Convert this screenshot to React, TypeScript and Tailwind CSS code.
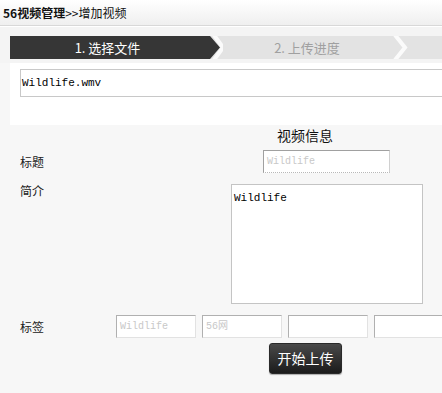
const cjk = "font-['SimSun','Noto_Sans_CJK_SC',sans-serif]";
const mono = "font-['Liberation_Mono','Noto_Sans_CJK_SC',monospace]";

const Chevron = ({ dark }: { dark?: boolean }) => (
  <svg width="22" height="23" viewBox="0 0 22 23" className="shrink-0">
    {dark && <polygon points="0,0 9,0 19,11.5 9,23 0,23" fill="#363636" />}
    <polyline
      points={dark ? "13,-1 22,11.5 13,24" : "4,-1 14,11.5 4,24"}
      fill="none"
      stroke="#fbfbfb"
      strokeWidth="4"
    />
  </svg>
);

const TagInput = ({ value }: { value?: string }) => (
  <div className={`w-[80px] h-[23px] shrink-0 bg-white border border-[#b0b0b0] border-r-[#e2e2e2] border-b-[#e2e2e2] px-[3px] flex items-center text-[10px] text-[#c8c8c8] ${mono}`}>
    {value}
  </div>
);

export default function App() {
  return (
    <div className={`w-[442px] h-[393px] overflow-hidden bg-[#f7f7f7] ${cjk}`}>
      {/* Header */}
      <div className="h-[26px] bg-gradient-to-b from-white to-[#efefef] border-b border-[#d8d8d8] flex items-center pl-[3px] text-[12px] text-[#111]">
        <span className="font-bold">56视频管理</span>
        <span>&gt;&gt;增加视频</span>
      </div>

      {/* Steps */}
      <div className="bg-[#f4f4f4] pt-[9px] pb-[4px] pl-[10px] border-t border-white">
        <div className="flex h-[23px] bg-[#e3e3e3] w-[500px]">
          <div className="w-[191px] bg-[#363636] text-white text-[13px] flex items-center justify-center pl-[4px]">
            1. 选择文件
          </div>
          <Chevron dark />
          <div className="w-[168px] text-[#a0a0a0] text-[13px] flex items-center justify-center">
            2. 上传进度
          </div>
          <Chevron />
        </div>
      </div>

      {/* File panel */}
      <div className="ml-[10px] h-[62px] bg-white pt-[6px] pl-[10px]">
        <div className={`h-[28px] w-[440px] border border-[#c8c8c8] flex items-center pl-[1px] text-[11px] text-black ${mono}`}>
          Wildlife.wmv
        </div>
      </div>

      {/* Video info form */}
      <div className="pl-[168px] text-center text-[14px] leading-[18px] text-[#111] mt-[1px]">视频信息</div>

      <div className="flex items-center pl-[20px] mt-[6px]">
        <div className="w-[243px] text-[12px] text-[#222]">标题</div>
        <div className={`w-[127px] h-[23px] bg-white border border-[#a0a0a0] border-r-[#d0d0d0] border-b-[#b8b8b8] [border-bottom-style:dotted] px-[3px] flex items-center text-[10px] text-[#c8c8c8] ${mono}`}>
          Wildlife
        </div>
      </div>

      <div className="flex items-start pl-[20px] mt-[11px]">
        <div className="w-[211px] text-[12px] leading-[14px] text-[#222]">简介</div>
        <div className={`w-[192px] h-[120px] bg-white border border-[#c4c4c4] pt-[5px] pl-[2px] text-[11px] text-black ${mono}`}>
          Wildlife
        </div>
      </div>

      <div className="flex items-center pl-[20px] mt-[11px]">
        <div className="w-[96px] shrink-0 text-[12px] text-[#222]">标签</div>
        <div className="flex gap-[6px]">
          <TagInput value="Wildlife" />
          <TagInput value="56网" />
          <TagInput />
          <TagInput />
        </div>
      </div>

      <div className="ml-[269px] mt-[5px] w-[73px] h-[31px] rounded-[3px] bg-gradient-to-b from-[#4a4a4a] to-[#1c1c1c] border border-[#2a2a2a] shadow-[0_1px_1px_rgba(0,0,0,0.3)] flex items-center justify-center text-white text-[14px]">
        开始上传
      </div>
    </div>
  );
}
